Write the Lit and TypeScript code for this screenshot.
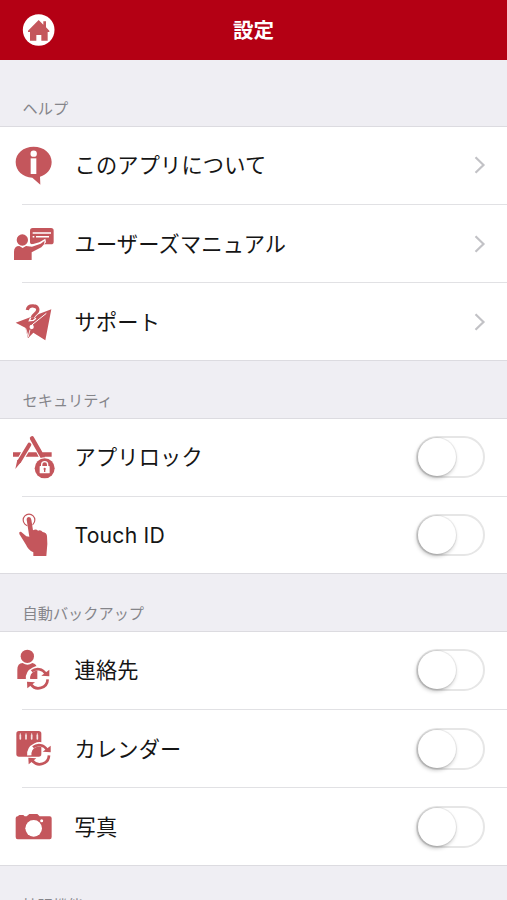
import { LitElement, html, svg, css, TemplateResult } from "lit";
import { customElement, property } from "lit/decorators.js";
import { classMap } from "lit/directives/class-map.js";

interface Item {
  label: string;
  icon: string;
  toggle?: boolean;
}
interface Section {
  title: string;
  items: Item[];
}

const SECTIONS: Section[] = [
  {
    title: "ヘルプ",
    items: [
      { label: "このアプリについて", icon: "info" },
      { label: "ユーザーズマニュアル", icon: "manual" },
      { label: "サポート", icon: "support" },
    ],
  },
  {
    title: "セキュリティ",
    items: [
      { label: "アプリロック", icon: "lock", toggle: true },
      { label: "Touch ID", icon: "touch", toggle: true },
    ],
  },
  {
    title: "自動バックアップ",
    items: [
      { label: "連絡先", icon: "contacts", toggle: true },
      { label: "カレンダー", icon: "calendar", toggle: true },
      { label: "写真", icon: "photo", toggle: true },
    ],
  },
  { title: "拡張機能", items: [] },
];

/* Circular sync arrows shared by the backup icons, centred on 0,0 */
const sync = svg`
  <path d="M-31 4A30 30 0 0 1 20 -20" fill="none" stroke="#fff" stroke-width="13"/>
  <path d="M-36 9L-4 11L-30 30L-38 24Z" fill="#fff"/>
  <path d="M-24 4A25 25 0 0 1 14 -17L27 2A28 28 0 0 1 -14 20Z" fill="#fff" opacity=".0"/>
  <g fill="none" stroke="#c4565c" stroke-width="8">
    <path d="M-20 -20A28 28 0 0 1 22 -13"/>
    <path d="M28 4A28 28 0 0 1 -22 20"/>
  </g>
  <path d="M33 -25V-5L9 -7Z"/>
  <path d="M-34 11L-10 13L-33 31Z"/>`;

const ICONS: Record<string, { box: string; art: TemplateResult }> = {
  info: {
    box: "24 27 150 153",
    art: svg`
      <path d="M101 50C132 50 155 70 155 96C155 117 141 134 120 140L121 164L97 143C68 142 47 122 47 96C47 70 70 50 101 50Z"/>
      <circle cx="101" cy="71" r="9.5" fill="#fff"/>
      <path d="M92 85H109V132H92Z" fill="#fff"/>`,
  },
  manual: {
    box: "24 24 150 153",
    art: svg`
      <rect x="90" y="54" width="71" height="49" rx="8"/>
      <path d="M98 69H153M98 80H103M108 80H147" stroke="#fff" stroke-width="4.5" fill="none"/>
      <circle cx="67" cy="90" r="20" fill="#fff"/>
      <circle cx="67" cy="90" r="17"/>
      <path d="M89 105L118 97L136 86L138 97L130 106L95 118Z" fill="#fff"/>
      <path d="M42 150V125Q42 108 58 108L68 114L78 108L96 110L122 101L134 92L132 103L124 112L95 127V150Z"/>`,
  },
  support: {
    box: "24 33 150 153",
    art: svg`
      <path d="M154 73L47 113L76 128L84 160L100 143L136 166Z"/>
      <path d="M82 74C84 66 91 62 101 63C114 64 117 75 109 83C103 88 99 91 97 98" fill="none" stroke="#fff" stroke-width="15"/>
      <path d="M82 75C84 65 91 62 101 63C114 64 117 75 109 83C103 88 99 91 97 98" fill="none" stroke="#c4565c" stroke-width="10"/>
      <path d="M139 85L99 117L92 125" fill="none" stroke="#fff" stroke-width="3"/>
      <path d="M92 98L88 107L100 106L108 100" fill="none" stroke="#fff" stroke-width="4"/>
      <circle cx="95" cy="126" r="6.5" fill="#fff"/>
      <path d="M77 130L85 155L90 134" fill="none" stroke="#fff" stroke-width="2.5"/>`,
  },
  lock: {
    box: "24 33 150 153",
    art: svg`
      <path d="M39 97H63L57 110H39ZM80 97H109L116 110H74ZM126 97H155V110H133Z"/>
      <path d="M96 55L129 113" fill="none" stroke="#c4565c" stroke-width="13" stroke-linecap="round"/>
      <path d="M89 73L56 128" fill="none" stroke="#fff" stroke-width="18"/>
      <path d="M88 74L58 124" fill="none" stroke="#c4565c" stroke-width="12" stroke-linecap="round"/>
      <path d="M52 119L63 126L46 147Z"/>
      <circle cx="134" cy="145" r="33" fill="#fff"/>
      <circle cx="134" cy="145" r="30"/>
      <rect x="119" y="138" width="30" height="22" rx="2" fill="#fff"/>
      <path d="M125 139V134A9 9 0 0 1 143 134V139" fill="none" stroke="#fff" stroke-width="4"/>
      <path d="M134 143A4 4 0 0 1 136 150V156H132V150A4 4 0 0 1 134 143Z"/>`,
  },
  touch: {
    box: "24 30 150 153",
    art: svg`
      <circle cx="87" cy="60" r="17.5" fill="none" stroke="#c4565c" stroke-width="3.5"/>
      <path d="M80 59Q80 51 87 51Q93 51 94 59L99 91Q108 86 114 92Q123 89 128 96Q140 98 141 108L142 132L139 168H100V157Q84 149 78 134L58 102Q56 94 63 95L79 109L88 110Z" stroke="#fff" stroke-width="2" paint-order="stroke"/>`,
  },
  contacts: {
    box: "24 27 150 153",
    art: svg`
      <circle cx="82" cy="64" r="20"/>
      <path d="M52 132V104Q52 85 68 84Q82 94 97 84Q111 86 112 104V132Z"/>
      <g transform="translate(115 129)">${sync}</g>`,
  },
  calendar: {
    box: "24 24 150 153",
    art: svg`
      <rect x="49" y="48" width="75" height="77" rx="8"/>
      <path d="M61 60V72M78 60V72M95 60V72M112 60V72" stroke="#fff" stroke-width="5" stroke-linecap="round" opacity=".85"/>
      <path d="M61 54V66M78 54V66M95 54V66M112 54V66" stroke="#f3d9da" stroke-width="2"/>
      <g transform="translate(119 117)">${sync}</g>`,
  },
  photo: {
    box: "24 33 150 153",
    art: svg`
      <path d="M53 79L58 75H70L74 79H80L88 72H112L119 79H149Q155 79 155 85V141Q155 148 149 148H53Q47 148 47 141V85Q47 79 53 79Z"/>
      <circle cx="101" cy="115" r="25" fill="#fff"/>
      <circle cx="125" cy="92" r="4.5" fill="#fff"/>`,
  },
};

@customElement("toggle-switch")
export class ToggleSwitch extends LitElement {
  @property({ type: Boolean }) on = false;

  static styles = css`
    .track {
      box-sizing: border-box;
      display: flex;
      width: 69px;
      height: 42px;
      border: 2px solid #e6e6e6;
      border-radius: 21px;
      background: #fff;
    }
    .track.on {
      justify-content: flex-end;
      background: #c4565c;
    }
    .knob {
      width: 38px;
      height: 38px;
      border-radius: 50%;
      background: #fff;
      box-shadow: 0 0 0 1px rgba(0, 0, 0, 0.06), -1px 2px 4px rgba(0, 0, 0, 0.27);
    }
  `;

  render() {
    return html`<div class=${classMap({ track: true, on: this.on })}><div class="knob"></div></div>`;
  }
}

@customElement("app-root")
export class AppRoot extends LitElement {
  static styles = css`
    :host {
      display: block;
      height: 900px;
      overflow: hidden;
      background: #efeef3;
      color: #151515;
      font-family: Inter, "Noto Sans CJK JP", sans-serif;
    }
    .bar {
      display: grid;
      grid-template-columns: 1fr auto 1fr;
      align-items: center;
      box-sizing: border-box;
      height: 60px;
      padding: 0 22px;
      background: #b40014;
      color: #fff;
    }
    .home {
      display: block;
      width: 33px;
      height: 33px;
    }
    .title {
      margin: 0;
      padding-top: 2px;
      font-size: 20.5px;
      line-height: 30px;
      font-weight: 700;
    }
    .heading {
      display: flex;
      align-items: flex-end;
      box-sizing: border-box;
      height: 57px;
      margin: 0;
      padding: 0 22.5px 7px;
      color: #85858a;
      font-size: 15.2px;
      line-height: 20px;
      font-weight: 400;
    }
    section:first-of-type .heading {
      height: 66px;
    }
    .group {
      border-top: 1px solid #dcdbe0;
      border-bottom: 1px solid #dcdbe0;
      background: #fff;
    }
    .row {
      display: flex;
      align-items: center;
      box-sizing: border-box;
      height: 77px;
      padding: 0 21px 2px 8px;
    }
    .row + .row {
      height: 78px;
      padding: 1px 21px 0 8px;
      background: linear-gradient(#e1e1e4, #e1e1e4) 22px 0 / 100% 1px no-repeat;
    }
    .pair .row + .row {
      height: 77px;
    }
    .icon {
      flex: none;
      width: 50px;
      height: 51px;
      fill: #c4565c;
    }
    .label {
      flex: 1;
      margin-left: 16.5px;
      font-size: 21.2px;
      line-height: 32px;
      letter-spacing: 0.2px;
      white-space: nowrap;
    }
    .chevron {
      width: 12px;
      height: 18px;
      fill: none;
      stroke: #c2c2c6;
      stroke-width: 2.2;
    }
    toggle-switch {
      margin-right: 1px;
    }
  `;

  private renderItem(item: Item) {
    const icon = ICONS[item.icon];
    return html`<div class="row">
      <svg class="icon" viewBox=${icon.box}>${icon.art}</svg>
      <span class="label">${item.label}</span>
      ${item.toggle
        ? html`<toggle-switch></toggle-switch>`
        : html`<svg class="chevron" viewBox="0 0 12 18"><path d="M1.5 1.2L9.5 9L1.5 16.8" /></svg>`}
    </div>`;
  }

  render() {
    return html`
      <header class="bar">
        <svg class="home" viewBox="0 0 99 99">
          <circle cx="50" cy="48" r="47.5" fill="#fff" />
          <path
            d="M50 18L64 32V22H72V40L82 50V54H77V80H58V63H43V80H24V54H18V50Z"
            fill="#c4565c"
          />
        </svg>
        <h1 class="title">設定</h1>
      </header>
      ${SECTIONS.map(
        (s) => html`<section>
          <h2 class="heading">${s.title}</h2>
          <div class=${classMap({ group: true, pair: s.items.length === 2 })}>
            ${s.items.map((i) => this.renderItem(i))}
          </div>
        </section>`
      )}
    `;
  }
}
